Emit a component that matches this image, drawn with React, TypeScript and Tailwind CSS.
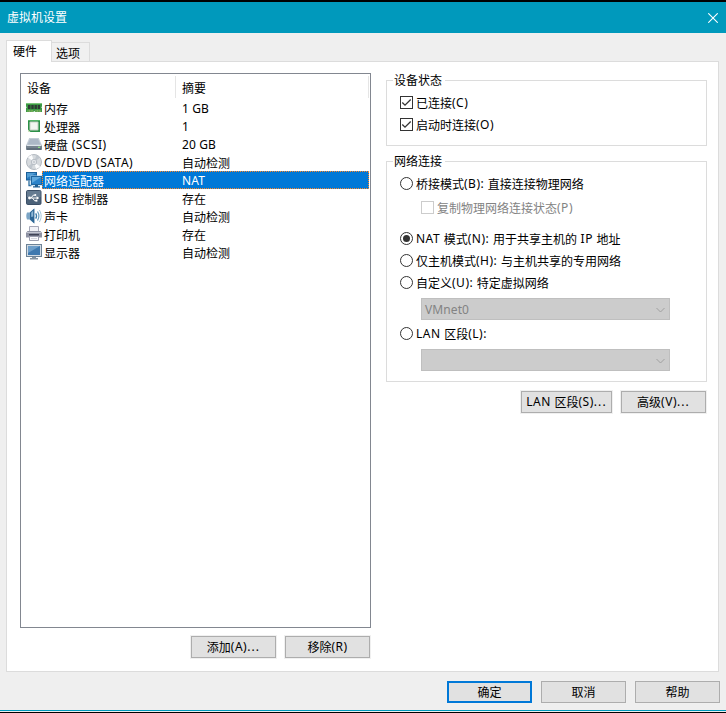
import React from "react";

const FONT = "font-['Noto_Sans','Noto_Sans_CJK_SC',sans-serif] text-[12px] leading-[18px]";

function Ram() {
  return (
    <svg width="16" height="16" viewBox="0 0 16 16">
      <path d="M0 3h16v3.500l-.8.8.8.8V12H9v-.8H7.600V12H0V8l.8-.7L0 6.500z" fill="#3c9a45" />
      <path d="M0 3h16v1H0z" fill="#7cc67c" />
      <path d="M2 5h2.500v4H2zM5.300 5h2.400v4H5.300zM8.500 5h2.400v4H8.500zM11.700 5h2.400v4h-2.400z" fill="#2c3a34" />
      <path d="M1.500 11h5.500M9.500 11h5.500" stroke="#c8c477" strokeDasharray="1 .6" />
    </svg>
  );
}

function Cpu() {
  return (
    <svg width="16" height="16" viewBox="0 0 16 16">
      <rect x="2" y="2" width="12" height="12" fill="#2c9048" />
      <rect x="2" y="2" width="12" height="1" fill="#55b568" />
      <rect x="3.500" y="3.500" width="9" height="9" rx="1" fill="#c6d0c4" />
      <rect x="4.500" y="4.500" width="7" height="7" fill="#f2f5f0" />
      <path d="M2 14v-2.500L4.500 14z" fill="#d2e4c2" />
    </svg>
  );
}

function Disk() {
  return (
    <svg width="16" height="16" viewBox="0 0 16 16">
      <path d="M3.200 2h9.600L16 9.500H0z" fill="#c3ccd6" />
      <path d="M4 3h8l2.300 5.500H1.700z" fill="#acb8c6" />
      <rect y="9" width="16" height="5" rx=".8" fill="#76838f" />
      <path d="M.5 9.500h15" stroke="#dde4ea" />
      <path d="M1 13h14" stroke="#4b5866" />
      <rect x="12" y="10.700" width="2" height="1.300" fill="#8fe085" />
    </svg>
  );
}

function Disc() {
  return (
    <svg width="16" height="16" viewBox="0 0 16 16">
      <circle cx="8" cy="8" r="7.500" fill="#d6dade" stroke="#a3abb4" strokeWidth=".8" />
      <path d="M8 8L2 3.500A7.300 7.300 0 0 1 6 1zM8 8l6 4.500A7.300 7.300 0 0 1 10 15z" fill="#fbfcfd" />
      <path d="M8 8L10.500 1a7.200 7.200 0 0 1 3.300 2.700zM8 8L5.500 15a7.200 7.200 0 0 1-3.300-2.700z" fill="#bfc6cd" />
      <circle cx="8" cy="8" r="2.700" fill="#eef0f3" stroke="#a3acb5" strokeWidth=".7" />
      <circle cx="8" cy="8" r="1" fill="#fff" stroke="#8b959f" strokeWidth=".5" />
    </svg>
  );
}

function Network() {
  return (
    <svg width="16" height="16" viewBox="0 0 16 16">
      <rect x=".5" y=".5" width="10" height="7.500" fill="#2679bd" stroke="#1b5f98" />
      <path d="M1 1h9L1 6z" fill="#519dd4" />
      <path d="M3 8.500v5h2.500" fill="none" stroke="#2c6d9f" strokeWidth="1.300" />
      <rect x="4.500" y="3.500" width="11.500" height="10" fill="#a9cfec" />
      <rect x="5.500" y="4.500" width="10" height="8" fill="#2c83c9" stroke="#1f669f" />
      <path d="M6 5h9l-9 6z" fill="#60a9dd" />
      <path d="M9 13h3v1.200h2V15.500H7v-1.300h2z" fill="#1f5f93" />
    </svg>
  );
}

function Usb() {
  return (
    <svg width="16" height="16" viewBox="0 0 16 16">
      <rect x=".5" y=".5" width="14.500" height="14" rx="1.200" fill="#4c6279" stroke="#3c5068" />
      <path d="M1 1h13.500v6H1z" fill="#657b91" />
      <path d="M3.500 8H11M5 8l2.200-2.800H9M6.500 8l2 2.700h1.700" fill="none" stroke="#fff" />
      <circle cx="3.500" cy="8" r="1.400" fill="#fff" />
      <path d="M10.600 6.300L13.300 8l-2.700 1.700z" fill="#fff" />
      <circle cx="9.300" cy="5" r="1" fill="#fff" />
      <path d="M9.500 9.800h1.900v1.800H9.500z" fill="#fff" />
    </svg>
  );
}

function Sound() {
  return (
    <svg width="16" height="16" viewBox="0 0 16 16">
      <path d="M1 4.500h2.500L8.300.5v15L3.500 11.500H1C0 9 0 7 1 4.500z" fill="#7ba5c6" />
      <path d="M4 4.500L8.300.5v15L4 11.500z" fill="#2c6695" />
      <path d="M5.200 4.800l2-2.200v6L5.200 9z" fill="#8db7d5" />
      <path d="M9.700 5.300c1 1.500 1 3.800 0 5.400" fill="none" stroke="#3d7da9" strokeWidth="1.300" />
      <path d="M11.500 3.500c1.800 2.800 1.800 6 0 9" fill="none" stroke="#659dbf" strokeWidth="1.200" />
      <path d="M13.400 2c2.300 3.800 2.300 8.200 0 12" fill="none" stroke="#a3c7da" />
    </svg>
  );
}

function Printer() {
  return (
    <svg width="16" height="16" viewBox="0 0 16 16">
      <path d="M3.500.5h9V7h-9z" fill="#f1f2f7" stroke="#a5a8b8" />
      <path d="M1.500 5h13L16 7v4.500H0V7z" fill="#8e92a3" />
      <path d="M1 6.500h14" stroke="#c4c7d2" />
      <path d="M3 8h10v1.500H3z" fill="#3f4356" />
      <path d="M3.500 10.500h9v4h-9z" fill="#fafafd" stroke="#9c9fb0" />
      <path d="M5 12.500h6" stroke="#d3d5dd" />
    </svg>
  );
}

function Display() {
  return (
    <svg width="16" height="16" viewBox="0 0 16 16">
      <rect x=".5" y=".5" width="15" height="12" fill="#d2dbe4" stroke="#6d8397" />
      <rect x="2" y="2" width="12" height="9" fill="#3f79af" />
      <path d="M2 2h12L2 9z" fill="#6e9ec9" />
      <path d="M6 13h4v1h2v1.500H4V14h2z" fill="#8494a2" />
    </svg>
  );
}

const devices = [
  { icon: <Ram />, name: "内存", summary: "1 GB" },
  { icon: <Cpu />, name: "处理器", summary: "1" },
  { icon: <Disk />, name: "硬盘 (SCSI)", summary: "20 GB" },
  { icon: <Disc />, name: "CD/DVD (SATA)", summary: "自动检测" },
  { icon: <Network />, name: "网络适配器", summary: "NAT", selected: true },
  { icon: <Usb />, name: "USB 控制器", summary: "存在" },
  { icon: <Sound />, name: "声卡", summary: "自动检测" },
  { icon: <Printer />, name: "打印机", summary: "存在" },
  { icon: <Display />, name: "显示器", summary: "自动检测" },
];

function runClass(run: string, tight: boolean) {
  if (/[\u3400-\u9fff]/.test(run)) return "align-[-1px]";
  if (run === "...") return "tracking-[1.1px]";
  return tight ? "tracking-[0.1px]" : "tracking-[0.5px]";
}

function Label({ children, tight = false }: { children: string; tight?: boolean }) {
  const runs = children.split(/([\u3400-\u9fff]+|\.\.\.)/).filter(Boolean);
  return (
    <span className="whitespace-pre">
      {runs.map((run, i) => (
        <span key={i} className={runClass(run, tight)}>
          {run}
        </span>
      ))}
    </span>
  );
}

function Button({ children, className = "w-[85px]", primary = false }: { children: string; className?: string; primary?: boolean }) {
  return (
    <button
      className={`flex h-[22px] shrink-0 items-center justify-center bg-[#e1e1e1] pt-px outline outline-[#f0f0f0] ${
        primary ? "border-2 border-[#0078d7]" : "border border-[#adadad]"
      } ${className}`}
    >
      <Label>{children}</Label>
    </button>
  );
}

function Check({ children, checked = false, disabled = false }: { children: string; checked?: boolean; disabled?: boolean }) {
  return (
    <label className={`flex h-[18px] items-center gap-[3px] ${disabled ? "text-[#838383]" : ""}`}>
      <span className={`mb-px flex size-[13px] shrink-0 border bg-white ${disabled ? "border-[#cccccc]" : "border-[#333333]"}`}>
        {checked && (
          <svg width="11" height="11" viewBox="0 0 11 11">
            <path d="M1.300 5.500l2.700 2.700L9.700 2.500" fill="none" stroke="#333" strokeWidth="1.300" />
          </svg>
        )}
      </span>
      <Label>{children}</Label>
    </label>
  );
}

function Radio({ children, checked = false }: { children: string; checked?: boolean }) {
  return (
    <label className="flex h-[18px] items-center gap-[3px]">
      <svg width="13" height="13" viewBox="0 0 13 13" className="mb-px shrink-0">
        <circle cx="6.500" cy="6.500" r="6" fill="#fff" stroke="#333" />
        {checked && <circle cx="6.500" cy="6.500" r="3.500" fill="#333" />}
      </svg>
      <Label>{children}</Label>
    </label>
  );
}

function Combo({ children = "" }: { children?: string }) {
  return (
    <div className="ml-[21px] flex h-[22px] w-[249px] items-center justify-between border border-[#bfbfbf] bg-[#cccccc] pt-px pr-1 pl-[3px] text-[#838383]">
      <Label tight>{children}</Label>
      <svg width="9" height="6" viewBox="0 0 9 6">
        <path d="M.5 1l4 4 4-4" fill="none" stroke="#a0a0a0" />
      </svg>
    </div>
  );
}

function Group({ title, className, children }: { title: string; className: string; children: React.ReactNode }) {
  return (
    <section className={`flex flex-col border border-[#dcdcdc] pl-[13px] ${className}`}>
      <h2 className="-mt-[9px] -ml-[7px] h-[18px] shrink-0 self-start bg-white pr-[3px] pl-px">{title}</h2>
      {children}
    </section>
  );
}

export default function App() {
  return (
    <div className={`flex h-[713px] w-[726px] flex-col overflow-hidden border-t-2 border-b border-black bg-[#efefef] text-black ${FONT}`}>
      <header className="flex h-[31px] shrink-0 items-center justify-between bg-[#0099bc] pr-2 pl-[7px] text-white">
        <h1>虚拟机设置</h1>
        <svg width="10" height="10" viewBox="0 0 10 10">
          <path d="M.3.300l9.400 9.400M9.700.300L.3 9.700" stroke="#fff" strokeWidth="1.100" />
        </svg>
      </header>

      <nav className="mt-[7px] ml-[6px] flex h-[22px] shrink-0 items-end">
        <div className="z-10 h-[22px] w-[46px] border border-b-0 border-[#dcdcdc] bg-white pt-[2px] pl-[6px]">硬件</div>
        <div className="-ml-px h-[20px] w-[39px] border border-b-0 border-[#dcdcdc] bg-[#f0f0f0] pt-[2px] pl-1 leading-[17px]">选项</div>
      </nav>

      <main className="-mt-px ml-[6px] flex h-[611px] w-[713px] shrink-0 border border-[#dcdcdc] bg-white pt-[11px] pl-[13px]">
        <div className="w-[351px]">
          <div className="h-[555px] border border-[#828790] pt-px">
            <div className="flex h-[24px] items-center pt-[2px]">
              <div className="-mt-[2px] flex h-full w-[155px] items-center border-r border-[#e5e5e5] pt-[4px] pl-[6px]">设备</div>
              <div className="-mt-[2px] flex h-full w-[193px] items-center border-r border-[#e5e5e5] pt-[4px] pl-[6px]">摘要</div>
            </div>
            {devices.map((d) => (
              <div key={d.name} className="flex h-[18px] items-center pl-[5px]">
                <span className="flex w-4 shrink-0">{d.icon}</span>
                <div
                  className={`flex h-[18px] w-[327px] items-center border pt-[2px] ${
                    d.selected ? "border-dotted border-[#ff8728] bg-[#0078d7] text-white" : "border-transparent"
                  }`}
                >
                  <span className="w-[139px] pl-px">
                    <Label>{d.name}</Label>
                  </span>
                  <Label tight>{d.summary}</Label>
                </div>
              </div>
            ))}
          </div>
          <div className="mt-2 mr-px flex justify-end gap-[9px]">
            <Button>添加(A)...</Button>
            <Button>移除(R)</Button>
          </div>
        </div>

        <div className="mt-[7px] ml-[15px] w-[321px]">
          <Group title="设备状态" className="h-[66px]">
            <div className="mt-[4px] flex flex-col gap-1">
              <Check checked>已连接(C)</Check>
              <Check checked>启动时连接(O)</Check>
            </div>
          </Group>
          <Group title="网络连接" className="mt-[15px] h-[221px]">
            <div className="mt-[4px] flex flex-col">
              <Radio>桥接模式(B): 直接连接物理网络</Radio>
              <div className="mt-[6px] ml-[21px]">
                <Check disabled>复制物理网络连接状态(P)</Check>
              </div>
              <div className="mt-[13px] flex flex-col gap-1">
                <Radio checked>NAT 模式(N): 用于共享主机的 IP 地址</Radio>
                <Radio>仅主机模式(H): 与主机共享的专用网络</Radio>
                <Radio>自定义(U): 特定虚拟网络</Radio>
              </div>
              <div className="mt-[6px] mb-[5px]">
                <Combo>VMnet0</Combo>
              </div>
              <Radio>LAN 区段(L):</Radio>
              <div className="mt-[6px]">
                <Combo />
              </div>
            </div>
          </Group>
          <div className="mt-[9px] mr-px flex justify-end gap-[9px]">
            <Button className="w-[91px]">LAN 区段(S)...</Button>
            <Button>高级(V)...</Button>
          </div>
        </div>
      </main>

      <footer className="flex h-[39px] shrink-0 justify-end gap-[9px] border-b border-[#0099bc] pt-[9px] pr-[6px]">
        <Button primary>确定</Button>
        <Button>取消</Button>
        <Button>帮助</Button>
      </footer>
    </div>
  );
}
